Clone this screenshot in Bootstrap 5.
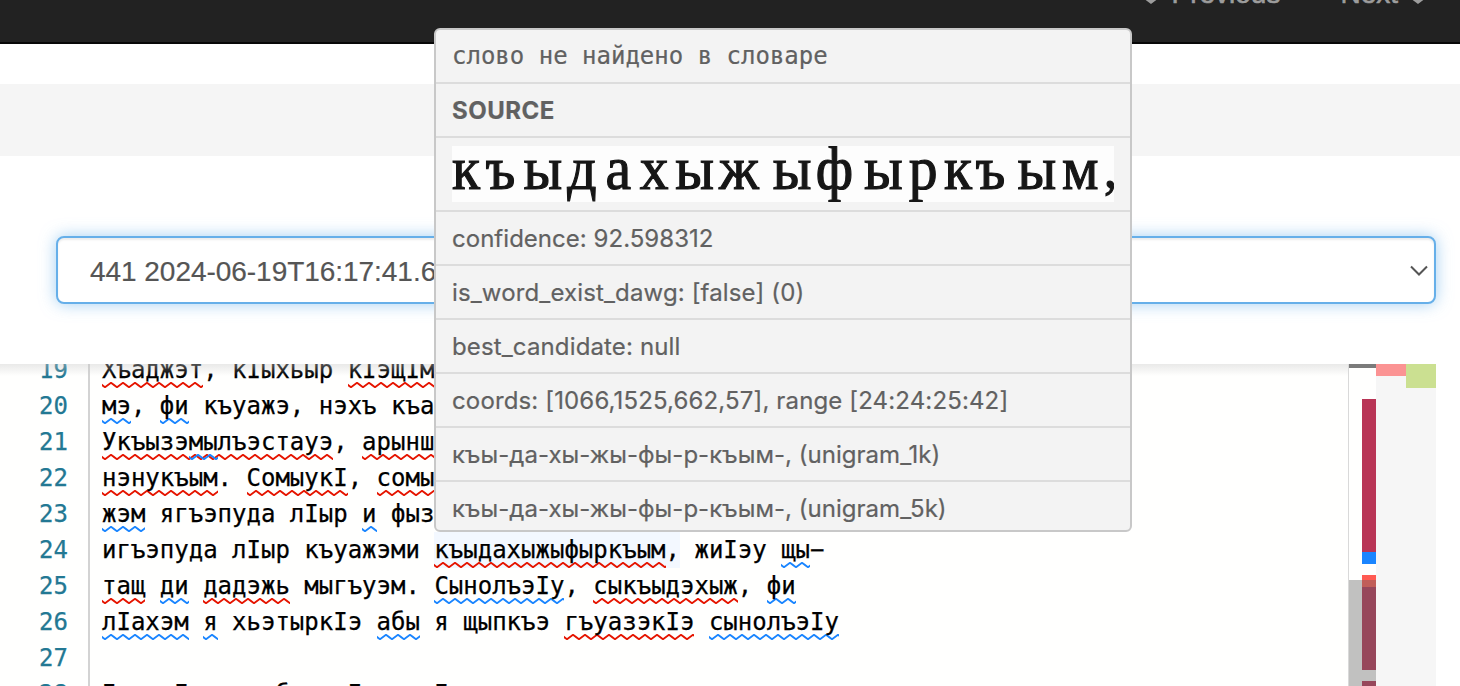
<!DOCTYPE html>
<html lang="ru">
<head>
<meta charset="utf-8">
<title>OCR editor</title>
<link rel="stylesheet" href="https://cdn.jsdelivr.net/npm/bootstrap@5.3.0/dist/css/bootstrap.min.css">
<style>
body{height:686px;background:#fff;font-family:"Liberation Sans",Arial,sans-serif;font-size:28px}
.topbar{height:44px;background:#222;border-bottom:2px solid #080808;color:#9d9d9d;padding-right:34px;-webkit-text-stroke:.6px #9d9d9d}
.topbar .pager-link{height:42px;line-height:40px;margin-top:-26px;gap:12px}
.strip{height:72px;margin-top:40px;background:#f5f5f5}
.picker{height:208px;padding:80px 24px 0 56px}
.picker .form-select{height:68px;border:2px solid #66afe9;border-radius:8px;background-image:none;color:#555;font-size:28px;line-height:40px;padding:14px 32px 10px;letter-spacing:-.04px;-webkit-text-stroke:.2px;box-shadow:inset 0 2px 2px rgba(0,0,0,.075),0 0 16px rgba(102,175,233,.6)}
.editor{height:322px;font:24px/36px "DejaVu Sans Mono",monospace;color:#000;background:#fffffe;-webkit-text-stroke:.25px}
.editor::before{content:"";position:absolute;z-index:1;inset:0 88px auto 0;height:12px;background:linear-gradient(rgba(200,200,200,.4),rgba(221,221,221,0))}
.gutter{width:90px;border-right:2px solid #d3d3d3;color:#237893;padding-right:20px;margin-right:12px}
.gutter div,.code div{height:36px;white-space:pre}
.lines{margin-top:-12px}
.code i{font-style:normal;display:inline-block;height:36px;vertical-align:top;background:left bottom/12px 6px repeat-x}
.code i.e{background-image:url("data:image/svg+xml,%3Csvg xmlns='http://www.w3.org/2000/svg' viewBox='0 0 12 6' width='12' height='6'%3E%3Cpath d='M-3 .8L3 5.2 9 .8l6 4.4' fill='none' stroke='%23e51400' stroke-width='1.9'/%3E%3C/svg%3E")}
.code i.w{background-image:url("data:image/svg+xml,%3Csvg xmlns='http://www.w3.org/2000/svg' viewBox='0 0 12 6' width='12' height='6'%3E%3Cpath d='M-3 .8L3 5.2 9 .8l6 4.4' fill='none' stroke='%231a85ff' stroke-width='1.9'/%3E%3C/svg%3E")}
.code .hl{display:inline-block;height:36px;vertical-align:top;background:#f3f8ff}
.ruler{width:28px;border-left:1px solid #d9d9d9;overflow:hidden}
.ruler .cursor-line{height:4px;background:#7b7b7b}
.ruler .seg{width:14px;margin-left:auto}
.ruler .thumb{inset:216px 0 0 -1px;background:rgba(100,100,100,.4)}
.diffmap{width:60px;background:#f6f6f6}
.hover-card{left:434px;top:28px;width:698px;height:504px;z-index:5;background:#f3f3f3;border:2px solid #c8c8c8;border-radius:6px;color:#616161;font:24px/36px Inter,sans-serif;letter-spacing:.03px;-webkit-text-stroke:.2px;overflow:hidden}
.hover-card>div{height:54px;padding:9px 16px 7px;border-bottom:2px solid #dcdcdc;white-space:nowrap}
.hover-card .looser{letter-spacing:.14px}
.hover-card .scan{height:74px;padding-top:8px}
.scan svg{display:block;background:#fdfdfd}
.scan text{font-family:"Liberation Serif",serif;letter-spacing:0;filter:blur(.7px)}
</style>
</head>
<body class="overflow-hidden position-relative">
<nav class="topbar d-flex justify-content-end align-items-start gap-5 overflow-hidden">
  <div class="pager-link d-flex" style="margin-right:12px"><svg width="16" height="32" viewBox="0 0 16 32" fill="currentColor"><path d="M4 16h8v8h4l-8 6-8-6h4z"/></svg>Previous</div>
  <div class="pager-link d-flex">Next<svg width="16" height="32" viewBox="0 0 16 32" fill="currentColor"><path d="M4 16h8v8h4l-8 6-8-6h4z"/></svg></div>
</nav>
<div class="strip"></div>
<div class="picker position-relative">
  <div class="form-select d-flex justify-content-between"><span>441 2024-06-19T16:17:41.6</span>
  <svg width="18" height="12" viewBox="0 0 18 12" fill="none" stroke="#555" stroke-width="2" style="margin:13px -26px 0 0"><path d="M1 1.5l8 8 8-8"/></svg></div>
</div>
<main class="editor d-flex position-relative overflow-hidden me-4">
  <div class="gutter text-end"><div class="lines"><div>19</div><div>20</div><div>21</div><div>22</div><div>23</div><div>24</div><div>25</div><div>26</div><div>27</div><div>28</div></div></div>
  <div class="code flex-grow-1"><div class="lines h-auto"><div><i class="e">Хъаджэт</i>, кIыхьыр <i class="e">кIэщIм</i></div><div><i class="w">мэ</i>, <i class="w">фи</i> къуажэ, нэхъ къа</div><div><i class="e">Укъызэ<i class="w">мы</i>лъэстауэ</i>, <i class="e">арынш</i></div><div><i class="e">нэнукъым</i>. <i class="e">СомыукI</i>, <i class="e">сомы</i></div><div><i class="w">жэм</i> ягъэпуда лIыр <i class="w">и</i> фыз</div><div>игъэпуда лIыр къуажэми <span class="hl"><i class="e">къыдахыжыфыркъым</i>,</span> жиIэу <i class="w">щы</i>−</div><div><i class="e">тащ</i> <i class="w">ди</i> <i class="e">дадэжь</i> мыгъуэм. <i class="w">СынолъэIу</i>, <i class="e">сыкъыдэхыж</i>, <i class="w">фи</i></div><div><i class="w">лIахэм</i> <i class="w">я</i> хьэтыркIэ <i class="w">абы</i> я щыпкъэ <i class="e">гъуазэкIэ</i> <i class="w">сынолъэIу</i></div><div></div><div>Iуэ, Iуэху абы и Iуэху I</div></div></div>
  <div class="ruler position-relative flex-shrink-0">
    <div class="cursor-line"></div>
    <div class="seg" style="height:153px;margin-top:31px;background:#b93556"></div>
    <div class="seg" style="height:12px;background:#1a85ff"></div>
    <div class="seg" style="height:12px;margin-top:11px;background:#ff5a52"></div>
    <div class="seg" style="height:83px;background:#b93556"></div>
    <div class="seg" style="height:12px;margin-top:11px;background:#b93556"></div>
    <div class="thumb position-absolute"></div>
  </div>
  <div class="diffmap d-flex align-items-start flex-shrink-0"><div style="width:30px;height:12px;background:#fb9393"></div><div style="width:30px;height:24px;background:#cbe091"></div></div>
</main>
<aside class="hover-card position-absolute">
  <div style="font-family:'DejaVu Sans Mono',monospace;padding-top:8px;letter-spacing:0">слово не найдено в словаре</div>
  <div class="fw-bold" style="letter-spacing:.5px">SOURCE</div>
  <div class="scan"><svg width="662" height="56" viewBox="0 0 662 56"><g transform="scale(.93 1)" fill="#161616" stroke="#161616" stroke-width="1.2"><text y="43" x="0 36 77 124 165 202 240 287 345 391 443 491 529 563 608 656" font-size="62">къыдахыжыфыркъым</text><text x="701" y="41" font-size="56">,</text></g></svg></div>
  <div>confidence: 92.598312</div>
  <div class="looser">is_word_exist_dawg: [false] (0)</div>
  <div class="looser">best_candidate: null</div>
  <div class="looser">coords: [1066,1525,662,57], range [24:24:25:42]</div>
  <div>къы-да-хы-жы-фы-р-къым-, (unigram_1k)</div>
  <div class="border-0">къы-да-хы-жы-фы-р-къым-, (unigram_5k)</div>
</aside>
<script src="https://cdn.jsdelivr.net/npm/bootstrap@5.3.0/dist/js/bootstrap.bundle.min.js"></script>
</body>
</html>
